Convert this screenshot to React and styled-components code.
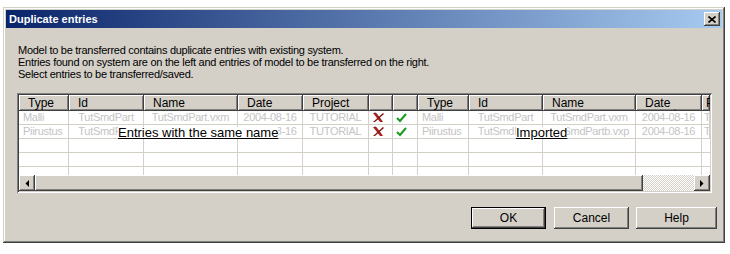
import React from 'react';
import styled, { createGlobalStyle } from 'styled-components';

const GlobalStyle = createGlobalStyle`
  body {
    margin: 0;
    background: #fff;
    font-family: "Liberation Sans", Arial, sans-serif;
    font-size: 11px;
  }
`;

const raised = `
  box-shadow: inset -1px -1px #404040, inset 1px 1px #fff,
    inset -2px -2px #808080, inset 2px 2px #d4d0c8;
`;

const Window = styled.div`
  margin: 7px 0 0 3px;
  width: 722px;
  height: 236px;
  box-sizing: border-box;
  padding: 3px;
  background: #d4d0c8;
  box-shadow: inset -1px -1px #404040, inset 1px 1px #d4d0c8,
    inset -2px -2px #808080, inset 2px 2px #fff;
  display: flex;
  flex-direction: column;
`;

const TitleBar = styled.div`
  height: 18px;
  display: flex;
  align-items: center;
  justify-content: space-between;
  padding: 0 2px 0 3px;
  background: linear-gradient(90deg, #0a246a, #a6caf0);
  color: #fff;
  font-weight: bold;
  font-size: 11px;
`;

const CloseButton = styled.div`
  width: 16px;
  height: 14px;
  background: #d4d0c8;
  ${raised}
  display: flex;
  align-items: center;
  justify-content: center;
`;

const Message = styled.div`
  margin: 16px 0 0 12px;
  line-height: 12px;
  letter-spacing: -0.27px;
  color: #000;
`;

const TableFrame = styled.div`
  position: relative;
  margin: 13px 0 0 11px;
  width: 695px;
  height: 100px;
  box-sizing: border-box;
  padding: 2px;
  background: #fff;
  box-shadow: inset 1px 1px #808080, inset -1px -1px #fff,
    inset 2px 2px #404040, inset -2px -2px #d4d0c8;
  display: flex;
  flex-direction: column;
  overflow: hidden;
`;

const columns = '50px 75px 94px 65px 66px 24px 25px 51px 74px 93px 66px 8px';

const Grid = styled.div`
  flex: 1;
  overflow: hidden;
`;

const HeaderRow = styled.div`
  display: grid;
  grid-template-columns: ${columns};
  height: 16px;
`;

const HeaderCell = styled.div`
  background: #d4d0c8;
  box-shadow: inset -1px -1px #404040, inset 1px 1px #fff, inset -2px -2px #808080;
  padding-left: ${(p) => p.$pad ?? 9}px;
  line-height: 16px;
  font-size: 12px;
  color: #000;
  white-space: nowrap;
  overflow: hidden;
`;

const SortMark = styled.span`
  margin-left: 3px;
  font-size: 9px;
  vertical-align: -2px;
`;

const Row = styled.div`
  display: grid;
  grid-template-columns: ${columns};
  height: 14px;
`;

const Cell = styled.div`
  box-sizing: border-box;
  height: 14px;
  border-right: 1px solid #d4d0c8;
  border-bottom: 1px solid #d4d0c8;
  padding: 0 ${(p) => p.$pad ?? 4}px;
  color: #c4c4c4;
  line-height: 13px;
  letter-spacing: -0.3px;
  white-space: nowrap;
  overflow: hidden;
  display: flex;
  align-items: center;
  justify-content: ${(p) => (p.$center ? 'center' : 'flex-start')};
`;

const ScrollBar = styled.div`
  height: 16px;
  display: flex;
`;

const ArrowButton = styled.div`
  width: 16px;
  height: 16px;
  background: #d4d0c8;
  ${raised}
  display: flex;
  align-items: center;
  justify-content: center;
`;

const Thumb = styled.div`
  width: 608px;
  background: #d4d0c8;
  ${raised}
`;

const Track = styled.div`
  flex: 1;
  background-color: #fff;
  background-image: conic-gradient(#d4d0c8 25%, #fff 0 50%, #d4d0c8 0 75%, #fff 0);
  background-size: 2px 2px;
`;

const OverLabel = styled.span`
  position: absolute;
  top: 34px;
  left: ${(p) => p.$left}px;
  font-size: 13px;
  line-height: 12px;
  color: #000;
  background: #fff;
  text-decoration: underline;
  white-space: nowrap;
`;

const ButtonRow = styled.div`
  margin-top: 14px;
  padding-right: 5px;
  display: flex;
  justify-content: flex-end;
`;

const Button = styled.div`
  width: ${(p) => p.$w ?? 75}px;
  height: 22px;
  margin-left: ${(p) => p.$gap ?? 0}px;
  box-sizing: border-box;
  background: #d4d0c8;
  display: flex;
  align-items: center;
  justify-content: center;
  color: #000;
  font-size: 12px;
  ${(p) =>
    p.$default
      ? `border: 1px solid #000;
         box-shadow: inset -1px -1px #404040, inset 1px 1px #fff, inset -2px -2px #808080;`
      : raised}
`;

const CrossIcon = () => (
  <svg width="13" height="11" viewBox="0 0 13 11">
    <path d="M1 1 L4 1 L11 10 L8 10 Z" fill="#b0201a" />
    <path d="M11 1 L12 2 L3 10 L1 10 Z" fill="#8a1410" />
    <path d="M2 1 L4 1 L10 9" stroke="#602020" strokeWidth="0.6" fill="none" />
  </svg>
);

const CheckIcon = () => (
  <svg width="11" height="10" viewBox="0 0 11 10">
    <path d="M1 5 L4 8 L10 1" stroke="#1a9a1a" strokeWidth="2" fill="none" />
  </svg>
);

const Triangle = ({ dir }) => (
  <svg width="4" height="7" viewBox="0 0 4 7">
    {dir === 'left' ? (
      <path d="M4 0 L4 7 L0.5 3.5 Z" fill="#000" />
    ) : (
      <path d="M0 0 L0 7 L3.5 3.5 Z" fill="#000" />
    )}
  </svg>
);

const headers = ['Type', 'Id', 'Name', 'Date', 'Project', '', '', 'Type', 'Id', 'Name', 'Date', 'P'];

const rows = [
  ['Malli', 'TutSmdPart', 'TutSmdPart.vxm', '2004-08-16', 'TUTORIAL'],
  ['Piirustus', 'TutSmdPart', 'TutSmdPartb.vxp', '2004-08-16', 'TUTORIAL'],
];

const App = () => (
  <>
    <GlobalStyle />
    <Window>
      <TitleBar>
        <span>Duplicate entries</span>
        <CloseButton>
          <svg width="8" height="7" viewBox="0 0 8 7">
            <path d="M0.5 0.5 L7.5 6.5 M7.5 0.5 L0.5 6.5" stroke="#000" strokeWidth="1.6" />
          </svg>
        </CloseButton>
      </TitleBar>
      <Message>
        Model to be transferred contains duplicate entries with existing system.
        <br />
        Entries found on system are on the left and entries of model to be transferred on the right.
        <br />
        Select entries to be transferred/saved.
      </Message>
      <TableFrame>
        <Grid>
          <HeaderRow>
            {headers.map((h, i) => (
              <HeaderCell key={i} $pad={i === 11 ? 4 : 9}>
                {h}
                {i === 10 && <SortMark>ˏ</SortMark>}
              </HeaderCell>
            ))}
          </HeaderRow>
          {[0, 1, 2, 3, 4].map((r) => {
            const d = rows[r];
            return (
              <Row key={r}>
                {d ? (
                  <>
                    {d.map((v, i) => (
                      <Cell key={'l' + i} $center={i > 0}>{v}</Cell>
                    ))}
                    <Cell $pad={3}><CrossIcon /></Cell>
                    <Cell $pad={3}><CheckIcon /></Cell>
                    {d.slice(0, 4).map((v, i) => (
                      <Cell key={'r' + i} $center={i > 0}>{v}</Cell>
                    ))}
                    <Cell $pad={2}>T</Cell>
                  </>
                ) : (
                  headers.map((_, i) => <Cell key={i} />)
                )}
              </Row>
            );
          })}
        </Grid>
        <ScrollBar>
          <ArrowButton><Triangle dir="left" /></ArrowButton>
          <Thumb />
          <Track />
          <ArrowButton><Triangle dir="right" /></ArrowButton>
        </ScrollBar>
        <OverLabel $left={101}>Entries with the same name</OverLabel>
        <OverLabel $left={499}>Imported</OverLabel>
      </TableFrame>
      <ButtonRow>
        <Button $default>OK</Button>
        <Button $gap={8}>Cancel</Button>
        <Button $gap={7} $w={81}>Help</Button>
      </ButtonRow>
    </Window>
  </>
);

export default App;
